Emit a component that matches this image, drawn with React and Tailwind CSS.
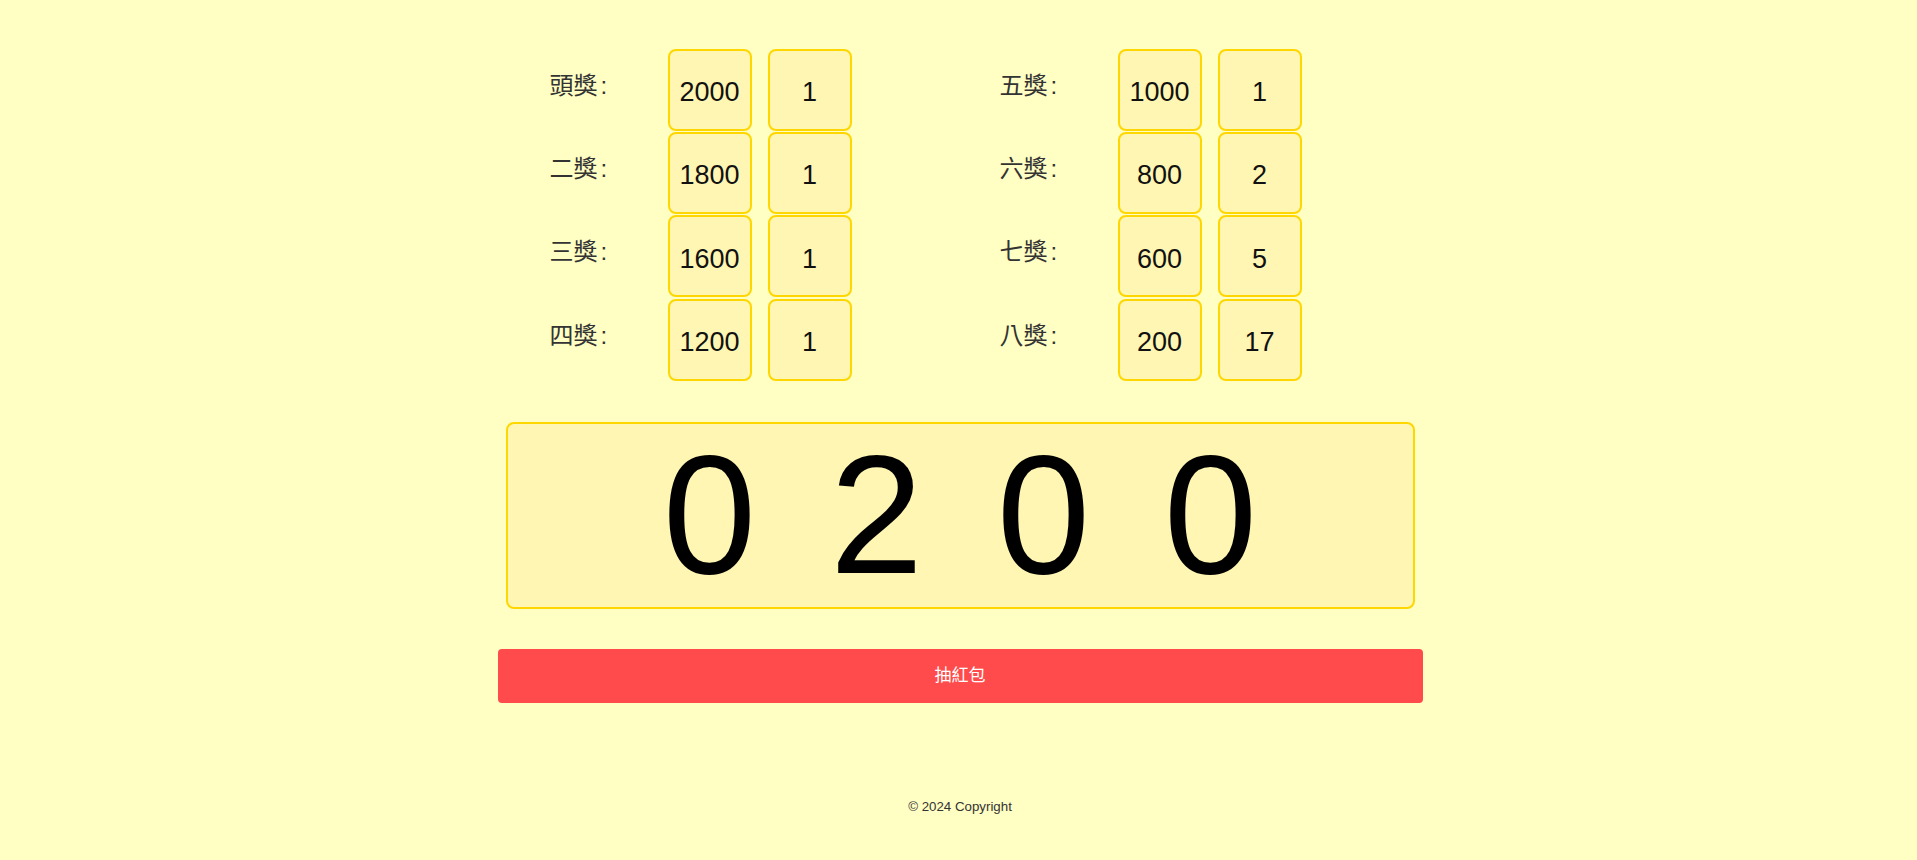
import React from 'react'

// ── Prize data ───────────────────────────────────────────────
const LEFT = [
  { name: '頭獎', amount: '2000', count: '1' },
  { name: '二獎', amount: '1800', count: '1' },
  { name: '三獎', amount: '1600', count: '1' },
  { name: '四獎', amount: '1200', count: '1' },
]

const RIGHT = [
  { name: '五獎', amount: '1000', count: '1' },
  { name: '六獎', amount: '800', count: '2' },
  { name: '七獎', amount: '600', count: '5' },
  { name: '八獎', amount: '200', count: '17' },
]

const DIGITS = ['0', '2', '0', '0']

const cjk = "font-['Liberation_Sans','Noto_Sans_CJK_TC',sans-serif]"

function Cell({ children }) {
  return (
    <div className="w-[84px] h-[82px] rounded-[8px] border-2 border-[#ffd700] bg-[#fff6b3] flex items-center justify-center pt-[5px] text-[27px] text-[#111]">
      {children}
    </div>
  )
}

function PrizeColumn({ rows }) {
  return (
    <div className="flex flex-col gap-[1.2px]">
      {rows.map((r) => (
        <div key={r.name} className="flex items-center">
          <div className={`w-[118px] pb-[8px] text-[24px] text-[#333] ${cjk}`}>
            {r.name}
            <span className="ml-[3px]">:</span>
          </div>
          <div className="flex gap-[16px]">
            <Cell>{r.amount}</Cell>
            <Cell>{r.count}</Cell>
          </div>
        </div>
      ))}
    </div>
  )
}

// ── App ──────────────────────────────────────────────────────
export default function App() {
  return (
    <div className={`min-h-screen bg-[#fffec3] pl-[3px] ${cjk}`}>
      <div className="w-[925px] mx-auto pt-[49px]">
        {/* Prize table */}
        <div className="flex pl-[52px] gap-[148px]">
          <PrizeColumn rows={LEFT} />
          <PrizeColumn rows={RIGHT} />
        </div>

        {/* Draw display */}
        <div className="mt-[41px] mx-[8px] h-[187px] rounded-[8px] border-2 border-[#ffd700] bg-[#fff6b3] flex items-center justify-center gap-[73.6px]">
          {DIGITS.map((d, i) => (
            <span key={i} className="text-[168px] leading-none text-black">
              {d}
            </span>
          ))}
        </div>

        {/* Draw button */}
        <button className="mt-[40px] w-full h-[54px] rounded-[4px] bg-[#ff4b4b] text-white text-[17px] flex items-center justify-center">
          抽紅包
        </button>
      </div>

      <footer className="mt-[94px] text-center text-[13.3px] text-[#333]">
        © 2024 Copyright
      </footer>
    </div>
  )
}
